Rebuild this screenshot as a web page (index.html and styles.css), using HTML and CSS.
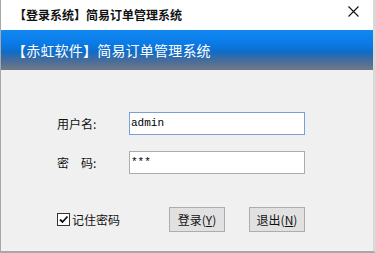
FILE: index.html
```html
<!DOCTYPE html>
<html lang="zh-CN">

<head>
    <meta charset="UTF-8">
    <title>【登录系统】简易订单管理系统</title>
    <link rel="stylesheet" href="styles.css">
</head>

<body>
    <section class="window">
        <div class="titlebar">
            <h2 class="titletext">【登录系统】简易订单管理系统</h2>
            <span class="closebtn">
                <svg width="11" height="11" viewBox="0 0 11 11">
                    <path d="M0.5 0.5 L10.5 10.5 M10.5 0.5 L0.5 10.5" stroke="#111" stroke-width="1.1" fill="none"/>
                </svg>
            </span>
        </div>
        <div class="banner">【赤虹软件】简易订单管理系统</div>
        <form class="loginform" action="javascript:;">
            <div class="fieldrow">
                <label class="fieldlabel">用户名:</label>
                <div class="textbox focused">admin</div>
            </div>
            <div class="fieldrow">
                <label class="fieldlabel">密　码:</label>
                <div class="textbox">***</div>
            </div>
            <div class="actionrow">
                <label class="remember">
                    <span class="checkbox">
                        <svg width="11" height="11" viewBox="0 0 11 11">
                            <path d="M2 5.5 L4.5 8 L9.5 2.5" stroke="#111" stroke-width="1.8" fill="none"/>
                        </svg>
                    </span>
                    记住密码
                </label>
                <div class="buttons">
                    <span class="winbtn">登录(<u>Y</u>)</span>
                    <span class="winbtn">退出(<u>N</u>)</span>
                </div>
            </div>
        </form>
    </section>
</body>

</html>
```

FILE: styles.css
```css
body {
    margin: 0;
    background-color: #f0f0f0;
    font-family: "Noto Sans CJK SC", "Noto Sans", sans-serif;
}

.window {
    width: 376px;
    height: 253px;
    box-sizing: border-box;
    border-left: 1px solid #a8a8a8;
    border-right: 3px solid #d8d8d8;
    border-bottom: 2px solid #a8a8a8;
    background-color: #f0f0f0;
    display: flex;
    flex-direction: column;
    overflow: hidden;
}

.titlebar {
    height: 30px;
    flex: none;
    background-color: #fff;
    display: flex;
    align-items: center;
    justify-content: space-between;
    padding: 0 14px 0 13px;
}

.titletext {
    margin: 0;
    font-size: 12px;
    font-weight: bold;
    color: #111;
    line-height: 30px;
}

.closebtn {
    display: flex;
    margin-top: -8px;
}

.banner {
    height: 40px;
    flex: none;
    box-sizing: border-box;
    padding: 0 0 0 11px;
    display: flex;
    align-items: center;
    font-size: 14px;
    color: #fff;
    letter-spacing: 0.2px;
    background: linear-gradient(to bottom, #1188f2 0%, #0a7ae6 35%, #0f6cc8 55%, #4a6c98 78%, #6f7a88 100%);
}

.loginform {
    display: flex;
    flex-direction: column;
    padding: 42px 0 0 56px;
}

.fieldrow {
    display: flex;
    align-items: center;
    margin-bottom: 16px;
}

.fieldlabel {
    width: 72px;
    font-size: 12px;
    color: #111;
}

.textbox {
    width: 176px;
    height: 23px;
    box-sizing: border-box;
    border: 1px solid #acacac;
    background-color: #fff;
    font-family: "Liberation Mono", monospace;
    font-size: 11px;
    line-height: 21px;
    padding-left: 1px;
    color: #000;
}

.textbox.focused {
    border-color: #7a9ed6;
}

.actionrow {
    display: flex;
    align-items: center;
    margin-top: 17px;
}

.remember {
    display: flex;
    align-items: center;
    gap: 2px;
    width: 112px;
    font-size: 12px;
    color: #111;
}

.checkbox {
    width: 13px;
    height: 13px;
    box-sizing: border-box;
    border: 1px solid #333;
    background-color: #fff;
    display: flex;
    align-items: center;
    justify-content: center;
}

.buttons {
    display: flex;
    gap: 24px;
}

.winbtn {
    width: 56px;
    height: 25px;
    box-sizing: border-box;
    border: 1px solid #adadad;
    background-color: #e1e1e1;
    font-size: 12px;
    color: #111;
    display: flex;
    align-items: center;
    justify-content: center;
}
```
